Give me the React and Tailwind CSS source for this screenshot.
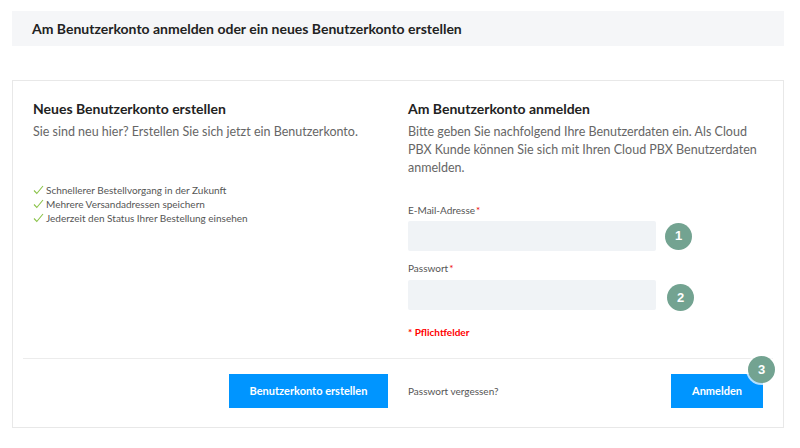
import React from "react";

function Badge({ n, className = "" }) {
  return (
    <span
      className={`flex h-[27px] w-[27px] items-center justify-center rounded-full bg-[#73a391] text-[13px] font-bold text-white shadow-[0_0_0_2px_rgba(255,255,255,0.7)] ${className}`}
      style={{ fontFamily: "Arial, 'Liberation Sans', sans-serif" }}
    >
      {n}
    </span>
  );
}

function Check() {
  return (
    <svg width="11" height="10" viewBox="0 0 11 10" className="mr-[2px] shrink-0">
      <path d="M1 5.5 L3.8 8.5 L10 1" fill="none" stroke="#8bc34a" strokeWidth="1.1" />
    </svg>
  );
}

export default function App() {
  const vorteile = [
    "Schnellerer Bestellvorgang in der Zukunft",
    "Mehrere Versandadressen speichern",
    "Jederzeit den Status Ihrer Bestellung einsehen",
  ];
  return (
    <div
      className="h-[448px] w-[800px] bg-white pl-[12px] pr-[16px] pt-[11px]"
      style={{ fontFamily: "Lato, 'Noto Sans', sans-serif" }}
    >
      {/* Kopfzeile */}
      <div className="flex h-[35px] items-center bg-[#f5f6f8] px-[20px]">
        <h1 className="text-[14px] font-bold text-[#222]">
          Am Benutzerkonto anmelden oder ein neues Benutzerkonto erstellen
        </h1>
      </div>

      <div className="mt-[34px] border border-[#e8e8e8]">
        <div className="grid grid-cols-2 gap-[20px] px-[20px] pt-[18px]">
          {/* Neues Konto */}
          <div>
            <h2 className="text-[14px] font-bold leading-[20px] text-[#222]">
              Neues Benutzerkonto erstellen
            </h2>
            <p className="mt-[4px] text-[12.5px] leading-[18px] text-[#666]">
              Sie sind neu hier? Erstellen Sie sich jetzt ein Benutzerkonto.
            </p>
            <ul className="mt-[42px] text-[10px] leading-[14px] text-[#555]">
              {vorteile.map((v) => (
                <li key={v} className="flex items-center">
                  <Check />
                  {v}
                </li>
              ))}
            </ul>
          </div>

          {/* Anmelden */}
          <div>
            <h2 className="text-[14px] font-bold leading-[20px] text-[#222]">
              Am Benutzerkonto anmelden
            </h2>
            <p className="mt-[4px] text-[12.5px] leading-[18px] text-[#666]">
              Bitte geben Sie nachfolgend Ihre Benutzerdaten ein. Als Cloud PBX Kunde können Sie
              sich mit Ihren Cloud PBX Benutzerdaten anmelden.
            </p>
            <label className="mt-[26px] block text-[10px] leading-[14px] text-[#555]">
              E-Mail-Adresse<span className="ml-[1px] text-[#e00]">*</span>
            </label>
            <div className="mt-[4px] flex items-center">
              <input className="h-[30px] w-[248px] rounded-[2px] bg-[#f0f3f6] outline-none" />
              <Badge n="1" className="ml-[9px]" />
            </div>
            <label className="mt-[10px] block text-[10px] leading-[14px] text-[#555]">
              Passwort<span className="ml-[1px] text-[#e00]">*</span>
            </label>
            <div className="mt-[4px] flex items-center">
              <input
                type="password"
                className="h-[30px] w-[248px] rounded-[2px] bg-[#f0f3f6] outline-none"
              />
              <Badge n="2" className="ml-[11px] mt-[5px]" />
            </div>
            <p className="mt-[14px] text-[10px] font-bold leading-[14px] text-[#f00]">
              * Pflichtfelder
            </p>
          </div>
        </div>

        {/* Fußzeile */}
        <div className="mx-[10px] mt-[19px] grid grid-cols-2 gap-[20px] border-t border-[#ececec] px-[10px] pb-[19px] pt-[15px]">
          <div className="flex justify-end">
            <button className="h-[34px] w-[159px] bg-[#0095ff] text-[11px] font-bold text-white">
              Benutzerkonto erstellen
            </button>
          </div>
          <div className="flex items-center justify-between">
            <a className="text-[10px] text-[#555]">Passwort vergessen?</a>
            <div className="relative">
              <button className="h-[34px] w-[92px] bg-[#0095ff] text-[11px] font-bold text-white">
                Anmelden
              </button>
              <Badge n="3" className="absolute -right-[12px] -top-[18px]" />
            </div>
          </div>
        </div>
      </div>
    </div>
  );
}
